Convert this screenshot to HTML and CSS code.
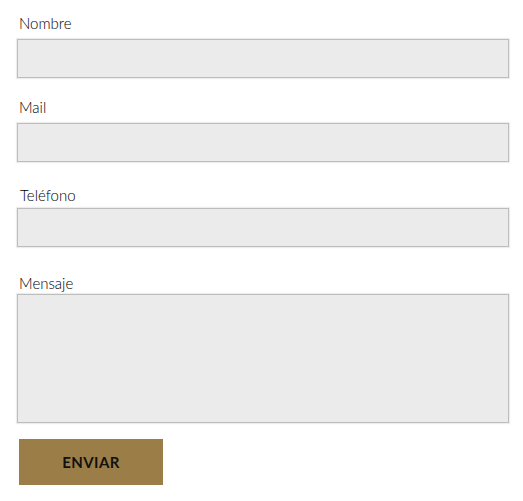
FILE: index.html
```html
<!DOCTYPE html>
<html lang="es">
<head>
<meta charset="utf-8">
<title>Contacto</title>
<link rel="stylesheet" href="styles.css">
</head>
<body>
<form class="contact-form">
  <div class="field field-1">
    <label class="label" for="nombre">Nombre</label>
    <input class="input" id="nombre" type="text">
  </div>
  <div class="field field-2">
    <label class="label" for="mail">Mail</label>
    <input class="input" id="mail" type="email">
  </div>
  <div class="field field-3">
    <label class="label label-shift" for="tel">Teléfono</label>
    <input class="input" id="tel" type="tel">
  </div>
  <div class="field field-4">
    <label class="label" for="msg">Mensaje</label>
    <textarea class="input textarea" id="msg"></textarea>
  </div>
  <button class="submit" type="button">ENVIAR</button>
</form>
</body>
</html>
```

FILE: styles.css
```css
html, body {
  margin: 0;
  padding: 0;
  background: #ffffff;
}

body {
  font-family: Lato, "Open Sans", Arial, sans-serif;
  color: #000000;
}

.contact-form {
  display: flex;
  flex-direction: column;
  padding: 14px 14px 0 17px;
  width: 492px;
}

.field {
  display: flex;
  flex-direction: column;
}

.label {
  display: block;
  font-size: 15px;
  font-weight: 300;
  color: #000000;
  line-height: 18px;
  padding-left: 2px;
  margin-bottom: 7px;
}

.label-shift {
  padding-left: 3px;
}

.field-1 { margin-bottom: 20px; }
.field-2 { margin-bottom: 24px; }
.field-3 { margin-bottom: 27px; }
.field-3 .label { margin-bottom: 4px; }
.field-4 .label { margin-bottom: 2px; }
.field-4 { margin-bottom: 16px; }

.input {
  box-sizing: border-box;
  width: 492px;
  height: 39px;
  margin: 0;
  background: #ebebeb;
  border: 1px solid #bdbdbd;
  box-shadow: 0 0 1px 1px rgba(0, 0, 0, 0.07);
  font-family: inherit;
  font-size: 15px;
  padding: 6px 8px;
  outline: none;
}

.textarea {
  height: 129px;
  resize: none;
  display: block;
}

.submit {
  align-self: flex-start;
  margin-left: 2px;
  width: 144px;
  height: 46px;
  background: #9b7e47;
  border: none;
  color: #111111;
  font-family: Lato, "Open Sans", Arial, sans-serif;
  font-weight: 700;
  font-size: 15px;
  letter-spacing: 0.4px;
  padding: 0;
  cursor: pointer;
}
```
